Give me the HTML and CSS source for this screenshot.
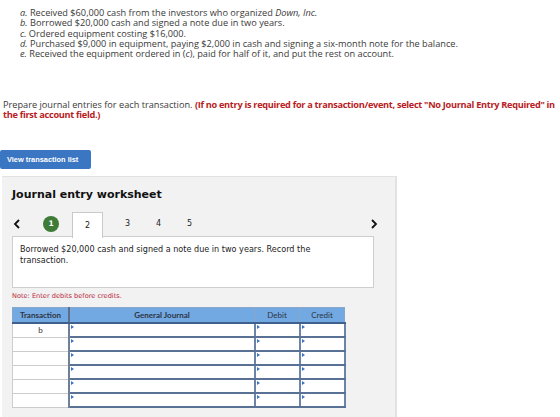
FILE: index.html
```html
<!DOCTYPE html>
<html>
<head>
<meta charset="utf-8">
<link rel="stylesheet" href="styles.css">
</head>
<body>
<div class="problem">
  <div><i>a.</i> Received $60,000 cash from the investors who organized <i>Down, Inc.</i></div>
  <div><i>b.</i> Borrowed $20,000 cash and signed a note due in two years.</div>
  <div><i>c.</i> Ordered equipment costing $16,000.</div>
  <div><i>d.</i> Purchased $9,000 in equipment, paying $2,000 in cash and signing a six-month note for the balance.</div>
  <div><i>e.</i> Received the equipment ordered in (<i>c</i>), paid for half of it, and put the rest on account.</div>
</div>

<p class="prompt">Prepare journal entries for each transaction. <b class="warn">(If no entry is required for a transaction/event, select "No Journal Entry Required" in the first account field.)</b></p>

<button class="list-btn">View transaction list</button>

<section class="worksheet">
  <h2 class="ws-title">Journal entry worksheet</h2>
  <div class="tabs">
    <span class="arrow">
      <svg width="8" height="10" viewBox="0 0 8 10"><path d="M6 1 L2 5 L6 9" fill="none" stroke="#111" stroke-width="1.8"/></svg>
    </span>
    <span class="done">1</span>
    <span class="tab active">2</span>
    <span class="tab first">3</span>
    <span class="tab">4</span>
    <span class="tab">5</span>
    <span class="arrow right">
      <svg width="8" height="10" viewBox="0 0 8 10"><path d="M2 1 L6 5 L2 9" fill="none" stroke="#111" stroke-width="1.8"/></svg>
    </span>
  </div>
  <div class="desc">Borrowed $20,000 cash and signed a note due in two years. Record the transaction.</div>
  <div class="note">Note: Enter debits before credits.</div>
  <table class="journal">
    <thead>
      <tr><th class="c-tr">Transaction</th><th class="c-gj">General Journal</th><th class="c-num">Debit</th><th class="c-num">Credit</th></tr>
    </thead>
    <tbody>
      <tr><td class="tr">b</td><td class="in"></td><td class="in"></td><td class="in"></td></tr>
      <tr><td class="tr"></td><td class="in"></td><td class="in"></td><td class="in"></td></tr>
      <tr><td class="tr"></td><td class="in"></td><td class="in"></td><td class="in"></td></tr>
      <tr><td class="tr"></td><td class="in"></td><td class="in"></td><td class="in"></td></tr>
      <tr><td class="tr"></td><td class="in"></td><td class="in"></td><td class="in"></td></tr>
      <tr><td class="tr"></td><td class="in"></td><td class="in"></td><td class="in"></td></tr>
    </tbody>
  </table>
</section>
</body>
</html>
```

FILE: styles.css
```css
html, body {
  margin: 0;
  padding: 0;
  background: #fff;
}

body {
  font-family: "Open Sans", "Lato", sans-serif;
  color: #333;
  overflow: hidden;
}

.problem {
  padding: 8px 0 0 20px;
  font-size: 9.2px;
  line-height: 10.3px;
  color: #3a3a3a;
}

.prompt {
  margin: 41px -6px 0 3px;
  font-size: 9.2px;
  line-height: 10px;
  color: #3a3a3a;
}

.warn {
  color: #b81c24;
  font-weight: 700;
  letter-spacing: -0.3px;
}

.list-btn {
  display: block;
  margin: 30px 0 0 0;
  width: 91px;
  height: 19px;
  padding: 0 0 0 7px;
  text-align: left;
  border: none;
  border-radius: 2px;
  background: #3b76c3;
  color: #fff;
  font-family: "Liberation Sans", Arial, sans-serif;
  font-weight: 700;
  font-size: 7.4px;
}

.worksheet {
  margin: 7px 0 0 2px;
  width: 395px;
  height: 260px;
  background: #f2f2f2;
  border-top: 1px solid #e2e2e2;
  border-right: 2px solid #e2e2e2;
  padding: 10px 0 0 10px;
  box-sizing: border-box;
}

.ws-title {
  margin: 0;
  font-family: "DejaVu Sans", Verdana, sans-serif;
  font-size: 11px;
  line-height: 16px;
  font-weight: 700;
  color: #111;
}

.tabs {
  display: flex;
  align-items: center;
  height: 25px;
  margin-top: 8px;
  font-family: "DejaVu Sans", Verdana, sans-serif;
  font-size: 8px;
  color: #222;
}

.arrow {
  width: 8px;
  height: 10px;
  margin-left: 1px;
  display: flex;
}

.arrow.right {
  margin-left: auto;
  margin-right: 17px;
}

.done {
  width: 16px;
  height: 16px;
  border-radius: 50%;
  background: #3d7b36;
  color: #fff;
  font-weight: 700;
  font-size: 7.5px;
  display: flex;
  align-items: center;
  justify-content: center;
  margin-left: 22px;
}

.tab {
  width: 31px;
  height: 25px;
  display: flex;
  align-items: center;
  justify-content: center;
}

.tab.first {
  margin-left: 9px;
}

.tab.active {
  margin-left: 13px;
  height: 26px;
  box-sizing: border-box;
  width: 31px;
  background: #fff;
  border: 1px solid #c9c9c9;
  border-bottom: none;
  position: relative;
  top: 1px;
  z-index: 1;
}

.desc {
  width: 362px;
  height: 52px;
  box-sizing: border-box;
  background: #fff;
  border: 1px solid #cfcfcf;
  padding: 7px 30px 7px 7px;
  font-family: "DejaVu Sans", Verdana, sans-serif;
  font-size: 8.1px;
  line-height: 11px;
  color: #222;
}

.note {
  margin-top: 4px;
  font-family: "DejaVu Sans", Verdana, sans-serif;
  font-size: 6.6px;
  line-height: 9px;
  color: #b8263a;
}

.journal {
  margin-top: 6px;
  border-collapse: collapse;
  font-family: "Lato", sans-serif;
  font-size: 8px;
  color: #333;
}

.journal th {
  background: #72a9e3;
  height: 14px;
  padding: 0;
  font-weight: 700;
  border: 1px solid #8aa6c8;
  border-bottom: 2px solid #3f5f8c;
  color: #2e3440;
}

.journal th.c-tr {
  width: 55px;
  border-right: 2px solid #5b6f8a;
}

.journal th.c-gj { width: 184px; }

.journal th.c-num {
  width: 44px;
  font-weight: 400;
}

.journal td {
  height: 12px;
  padding: 0;
  background: #fff;
}

.journal td.tr {
  border: 1px solid #cccccc;
  border-right: 2px solid #6f7f95;
  text-align: center;
  vertical-align: top;
  font-size: 8px;
  line-height: 12px;
}

.journal td.in {
  border: 1px solid #9eb0c8;
  border-bottom: 2px solid #5a7196;
  border-right: 2px solid #6c84a8;
  position: relative;
}

/* little blue marker in the top-left corner of each input cell */
.journal td.in::before {
  content: "";
  position: absolute;
  left: 1px;
  top: 1px;
  border-top: 2px solid transparent;
  border-bottom: 2px solid transparent;
  border-left: 3px solid #3b73c4;
}
```
